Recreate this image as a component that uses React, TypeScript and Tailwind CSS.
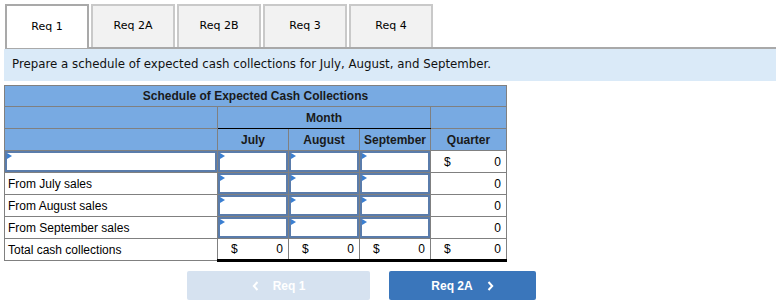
import React from 'react';

// ─── Data ─────────────────────────────────────────────────────────

const TABS = ['Req 1', 'Req 2A', 'Req 2B', 'Req 3', 'Req 4'];

const ROWS = ['From July sales', 'From August sales', 'From September sales'];

// ─── Pieces ───────────────────────────────────────────────────────

const InputCell: React.FC = () => (
  <td className="relative h-[22px] border border-[#808080] p-0">
    <div className="relative h-full w-full border-2 border-[#5a7cab] bg-white">
      <span className="absolute left-0 top-0 h-0 w-0 border-y-[3px] border-l-[5px] border-y-transparent border-l-[#3b7fd1]" />
    </div>
  </td>
);

const Dollar: React.FC<{ value?: string; dollar?: boolean; total?: boolean }> = ({ value = '0', dollar, total }) => (
  <td
    className={
      total
        ? 'h-[22px] border border-[#808080] border-t-black border-b-[3px] border-b-black px-[5px] py-0'
        : 'h-[22px] border border-[#808080] px-[5px] py-0'
    }
  >
    <div className="flex items-center justify-between">
      <span className="pl-[8px]">{dollar ? '$' : ''}</span>
      <span>{value}</span>
    </div>
  </td>
);

// ─── Page ─────────────────────────────────────────────────────────

const App: React.FC = () => {
  return (
    <main className="h-[306px] w-[776px] overflow-hidden bg-white pt-[4px]">
      {/* Tabs */}
      <div className="flex gap-[2px] pl-[5px] font-['DejaVu_Sans',Verdana,sans-serif] text-[11px] text-black">
        {TABS.map((t, i) => (
          <div
            key={t}
            className={
              i === 0
                ? 'relative z-10 -mb-px flex h-[44px] w-[84px] items-center justify-center border-2 border-b-0 border-[#a9a9a9] bg-white'
                : 'flex h-[43px] w-[84px] items-center justify-center border-2 border-b-0 border-[#c9c9c9] bg-[#f2f2f2]'
            }
          >
            {t}
          </div>
        ))}
      </div>
      <div className="ml-[5px] border-t-2 border-[#a9a9a9]" />

      {/* Instruction bar */}
      <div className="ml-[4px] flex h-[32px] items-center bg-[#daeaf8] pl-[8px] font-['DejaVu_Sans',Verdana,sans-serif] text-[11.8px] text-[#111]">
        Prepare a schedule of expected cash collections for July, August, and September.
      </div>

      {/* Schedule */}
      <table className="ml-[4px] mt-[4px] table-fixed border-collapse font-['Liberation_Sans',Arial,sans-serif] text-[12px] text-black">
        <colgroup>
          <col className="w-[213px]" />
          <col className="w-[71px]" />
          <col className="w-[71px]" />
          <col className="w-[71px]" />
          <col className="w-[76px]" />
        </colgroup>
        <thead>
          <tr className="h-[21px] bg-[#78aae2]">
            <th colSpan={5} className="border border-[#808080] p-0 text-center font-bold text-[#1a1a1a]">
              Schedule of Expected Cash Collections
            </th>
          </tr>
          <tr className="h-[22px] bg-[#78aae2]">
            <th className="border border-[#808080] p-0" />
            <th colSpan={3} className="border border-[#808080] border-b-black p-0 text-center font-bold text-[#1a1a1a]">
              Month
            </th>
            <th className="border border-[#808080] p-0" />
          </tr>
          <tr className="h-[22px] bg-[#78aae2]">
            <th className="border border-[#808080] p-0" />
            <th className="border border-[#808080] border-t-black p-0 text-center font-bold text-[#1a1a1a]">July</th>
            <th className="border border-[#808080] border-t-black p-0 text-center font-bold text-[#1a1a1a]">August</th>
            <th className="border border-[#808080] border-t-black p-0 text-center font-bold text-[#1a1a1a]">September</th>
            <th className="border border-[#808080] p-0 text-center font-bold text-[#1a1a1a]">Quarter</th>
          </tr>
        </thead>
        <tbody>
          <tr>
            <InputCell />
            <InputCell />
            <InputCell />
            <InputCell />
            <Dollar dollar />
          </tr>
          {ROWS.map((r) => (
            <tr key={r}>
              <td className="h-[22px] border border-[#808080] px-[3px] py-0">{r}</td>
              <InputCell />
              <InputCell />
              <InputCell />
              <Dollar />
            </tr>
          ))}
          <tr>
            <td className="h-[22px] border border-[#808080] px-[3px] py-0">Total cash collections</td>
            <Dollar dollar total />
            <Dollar dollar total />
            <Dollar dollar total />
            <Dollar dollar total />
          </tr>
        </tbody>
      </table>

      {/* Navigation */}
      <div className="mt-[9px] flex gap-[19px] pl-[187px] font-['Liberation_Sans',Arial,sans-serif] text-[12px] font-bold text-white">
        <button className="flex h-[29px] w-[183px] items-center justify-center gap-[14px] rounded-[2px] bg-[#d6e2f0]">
          <svg width="7" height="10" viewBox="0 0 7 10" className="text-white">
            <path d="M5.5 1 L1.8 5 L5.5 9" stroke="currentColor" strokeWidth="2" fill="none" />
          </svg>
          <span>Req 1</span>
        </button>
        <button className="flex h-[29px] w-[147px] items-center justify-center gap-[14px] rounded-[2px] bg-[#3a76bb]">
          <span>Req 2A</span>
          <svg width="7" height="10" viewBox="0 0 7 10">
            <path d="M1.5 1 L5.2 5 L1.5 9" stroke="currentColor" strokeWidth="2" fill="none" />
          </svg>
        </button>
      </div>
    </main>
  );
};

export default App;
